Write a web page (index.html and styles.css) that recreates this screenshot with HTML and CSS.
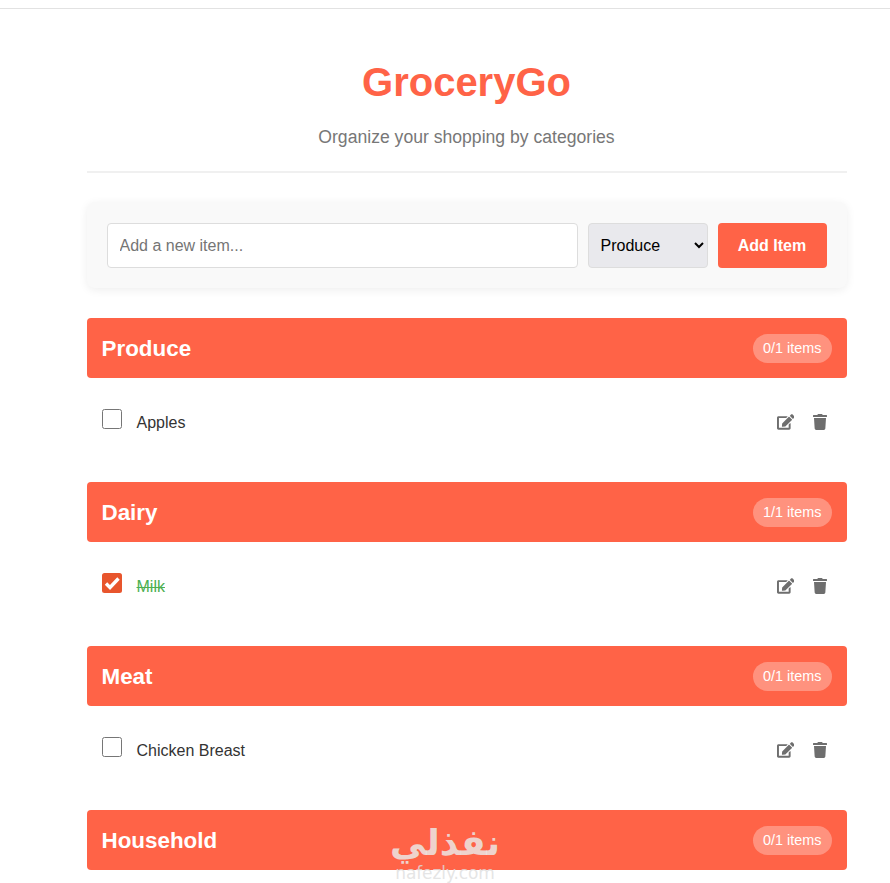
FILE: index.html
```html
<!DOCTYPE html>
<html lang="en">
<head>
<meta charset="utf-8">
<title>GroceryGo</title>
<link rel="stylesheet" href="styles.css">
</head>
<body>
<div class="top-rule"></div>
<main class="app">
  <header class="app-header">
    <h1>GroceryGo</h1>
    <p>Organize your shopping by categories</p>
  </header>
  <form class="add-form">
    <input class="add-input" type="text" placeholder="Add a new item...">
    <select class="add-select">
      <option>Produce</option><option>Dairy</option><option>Meat</option><option>Household</option>
    </select>
    <button class="add-btn" type="button">Add Item</button>
  </form>

  <section class="category">
    <div class="cat-head"><h2>Produce</h2><span class="badge">0/1 items</span></div>
    <div class="item">
      <span class="check"></span><span class="name">Apples</span>
      <span class="actions">
        <svg class="icon edit" viewBox="0 0 576 512"><path d="M402.6 83.2l90.2 90.2c3.8 3.8 3.8 10 0 13.8L274.4 405.6l-92.8 10.3c-12.4 1.4-22.9-9.1-21.5-21.5l10.3-92.8L388.8 83.2c3.8-3.8 10-3.8 13.8 0zm162-22.9l-48.8-48.8c-15.2-15.2-39.9-15.2-55.2 0l-35.4 35.4c-3.8 3.8-3.8 10 0 13.8l90.2 90.2c3.8 3.8 10 3.8 13.8 0l35.4-35.4c15.2-15.3 15.2-40 0-55.2zM384 346.2V448H64V128h229.8c3.2 0 6.2-1.3 8.5-3.5l40-40c7.6-7.6 2.2-20.5-8.5-20.5H48C21.5 64 0 85.5 0 112v352c0 26.5 21.5 48 48 48h352c26.5 0 48-21.5 48-48V306.2c0-10.7-12.9-16-20.5-8.5l-40 40c-2.2 2.3-3.5 5.3-3.5 8.5z"/></svg>
        <svg class="icon trash" viewBox="0 0 448 512"><path d="M432 32H312l-9.4-18.7A24 24 0 0 0 281.1 0H166.8a23.72 23.72 0 0 0-21.4 13.3L136 32H16A16 16 0 0 0 0 48v32a16 16 0 0 0 16 16h416a16 16 0 0 0 16-16V48a16 16 0 0 0-16-16zM53.2 467a48 48 0 0 0 47.9 45h245.8a48 48 0 0 0 47.9-45L416 128H32z"/></svg>
      </span>
    </div>
  </section>

  <section class="category">
    <div class="cat-head"><h2>Dairy</h2><span class="badge">1/1 items</span></div>
    <div class="item">
      <span class="check checked"><svg viewBox="0 0 20 20"><path d="M4 10.5l4 4 8.5-9" /></svg></span><span class="name done">Milk</span>
      <span class="actions">
        <svg class="icon edit" viewBox="0 0 576 512"><path d="M402.6 83.2l90.2 90.2c3.8 3.8 3.8 10 0 13.8L274.4 405.6l-92.8 10.3c-12.4 1.4-22.9-9.1-21.5-21.5l10.3-92.8L388.8 83.2c3.8-3.8 10-3.8 13.8 0zm162-22.9l-48.8-48.8c-15.2-15.2-39.9-15.2-55.2 0l-35.4 35.4c-3.8 3.8-3.8 10 0 13.8l90.2 90.2c3.8 3.8 10 3.8 13.8 0l35.4-35.4c15.2-15.3 15.2-40 0-55.2zM384 346.2V448H64V128h229.8c3.2 0 6.2-1.3 8.5-3.5l40-40c7.6-7.6 2.2-20.5-8.5-20.5H48C21.5 64 0 85.5 0 112v352c0 26.5 21.5 48 48 48h352c26.5 0 48-21.5 48-48V306.2c0-10.7-12.9-16-20.5-8.5l-40 40c-2.2 2.3-3.5 5.3-3.5 8.5z"/></svg>
        <svg class="icon trash" viewBox="0 0 448 512"><path d="M432 32H312l-9.4-18.7A24 24 0 0 0 281.1 0H166.8a23.72 23.72 0 0 0-21.4 13.3L136 32H16A16 16 0 0 0 0 48v32a16 16 0 0 0 16 16h416a16 16 0 0 0 16-16V48a16 16 0 0 0-16-16zM53.2 467a48 48 0 0 0 47.9 45h245.8a48 48 0 0 0 47.9-45L416 128H32z"/></svg>
      </span>
    </div>
  </section>

  <section class="category">
    <div class="cat-head"><h2>Meat</h2><span class="badge">0/1 items</span></div>
    <div class="item">
      <span class="check"></span><span class="name">Chicken Breast</span>
      <span class="actions">
        <svg class="icon edit" viewBox="0 0 576 512"><path d="M402.6 83.2l90.2 90.2c3.8 3.8 3.8 10 0 13.8L274.4 405.6l-92.8 10.3c-12.4 1.4-22.9-9.1-21.5-21.5l10.3-92.8L388.8 83.2c3.8-3.8 10-3.8 13.8 0zm162-22.9l-48.8-48.8c-15.2-15.2-39.9-15.2-55.2 0l-35.4 35.4c-3.8 3.8-3.8 10 0 13.8l90.2 90.2c3.8 3.8 10 3.8 13.8 0l35.4-35.4c15.2-15.3 15.2-40 0-55.2zM384 346.2V448H64V128h229.8c3.2 0 6.2-1.3 8.5-3.5l40-40c7.6-7.6 2.2-20.5-8.5-20.5H48C21.5 64 0 85.5 0 112v352c0 26.5 21.5 48 48 48h352c26.5 0 48-21.5 48-48V306.2c0-10.7-12.9-16-20.5-8.5l-40 40c-2.2 2.3-3.5 5.3-3.5 8.5z"/></svg>
        <svg class="icon trash" viewBox="0 0 448 512"><path d="M432 32H312l-9.4-18.7A24 24 0 0 0 281.1 0H166.8a23.72 23.72 0 0 0-21.4 13.3L136 32H16A16 16 0 0 0 0 48v32a16 16 0 0 0 16 16h416a16 16 0 0 0 16-16V48a16 16 0 0 0-16-16zM53.2 467a48 48 0 0 0 47.9 45h245.8a48 48 0 0 0 47.9-45L416 128H32z"/></svg>
      </span>
    </div>
  </section>

  <section class="category">
    <div class="cat-head"><h2>Household</h2><span class="badge">0/1 items</span></div>
  </section>
</main>
<div class="watermark">
  <div class="wm-ar" dir="rtl">نفذلي</div>
  <div class="wm-en">nafezly.com</div>
</div>
</body>
</html>
```
FILE: styles.css
```css
* { box-sizing: border-box; }
html, body { height: 883px; overflow: hidden; }
body {
  margin: 0;
  background: #fff;
  font-family: "Liberation Sans", Arial, sans-serif;
  color: #333;
  position: relative;
}
.top-rule { height: 9px; border-bottom: 1px solid #e2e2e2; }
.app { width: 760px; margin-left: 86.5px; }
.app-header {
  text-align: center;
  padding: 50px 0 24px;
  border-bottom: 2px solid #f0f0f0;
  margin-bottom: 29px;
}
.app-header h1 {
  margin: 0;
  font-size: 40px;
  line-height: 46px;
  font-weight: 700;
  color: #ff6347;
}
.app-header p {
  margin: 22px 0 0;
  font-size: 17.6px;
  line-height: 20px;
  color: #777;
}
.add-form {
  display: flex;
  gap: 10px;
  height: 86px;
  padding: 21px 20px 20px;
  margin-bottom: 30px;
  background: #f9f9f9;
  border-radius: 8px;
  box-shadow: 0 2px 10px rgba(0,0,0,.07);
}
.add-input {
  flex: 1;
  min-width: 0;
  padding: 12px;
  font: 16px "Liberation Sans", Arial, sans-serif;
  border: 1px solid #ddd;
  border-radius: 4px;
  background: #fff;
}
.add-input::placeholder { color: #757575; }
.add-select {
  width: 120px;
  padding: 12px 8px;
  font: 16px "Liberation Sans", Arial, sans-serif;
  color: #000;
  border: 1px solid #ddd;
  border-radius: 4px;
  background: #e9e9ed;
}
.add-btn {
  width: 109px;
  padding: 0;
  font: 700 16px "Liberation Sans", Arial, sans-serif;
  color: #fff;
  background: #ff6347;
  border: 0;
  border-radius: 4px;
}
.category { margin-bottom: 16px; }
.cat-head {
  display: flex;
  justify-content: space-between;
  align-items: center;
  height: 60px;
  padding: 0 15px;
  background: #ff6347;
  color: #fff;
  border-radius: 4px;
}
.cat-head h2 { margin: 0; padding-top: 2px; font-size: 22.4px; font-weight: 700; }
.badge {
  padding: 6px 10px;
  font-size: 14.4px;
  line-height: 17px;
  color: #fff;
  background: rgba(255,255,255,.3);
  border-radius: 20px;
}
.item {
  display: flex;
  align-items: center;
  height: 88px;
  padding: 0 15px;
}
.check {
  width: 20px;
  height: 20px;
  margin-top: -6px;
  border: 1px solid #767676;
  border-radius: 2.5px;
  background: #fff;
  flex: none;
}
.check.checked { background: #e8552d; border: 0; }
.check svg { display: block; width: 20px; height: 20px; fill: none; stroke: #fff; stroke-width: 3.4; }
.name { margin-left: 15px; padding-top: 2px; font-size: 16px; line-height: 18px; flex: 1; }
.name.done { color: #4caf50; text-decoration: line-through; }
.actions { display: flex; align-items: center; gap: 19px; margin-right: 5px; }
.icon { display: block; height: 16px; fill: #6e6e6e; }
.icon.edit { width: 17.5px; }
.icon.trash { width: 14px; margin-left: -.5px; }
.watermark {
  position: absolute;
  left: 345px;
  top: 822px;
  width: 200px;
  text-align: center;
  pointer-events: none;
}
.wm-ar {
  font: 700 36px/42px "DejaVu Sans", sans-serif;
  color: rgba(235,232,230,.85);
}
.wm-en {
  font: 400 17px/18px "DejaVu Sans", sans-serif;
  color: rgba(222,222,222,.8);
  letter-spacing: -.1px;
}
```
